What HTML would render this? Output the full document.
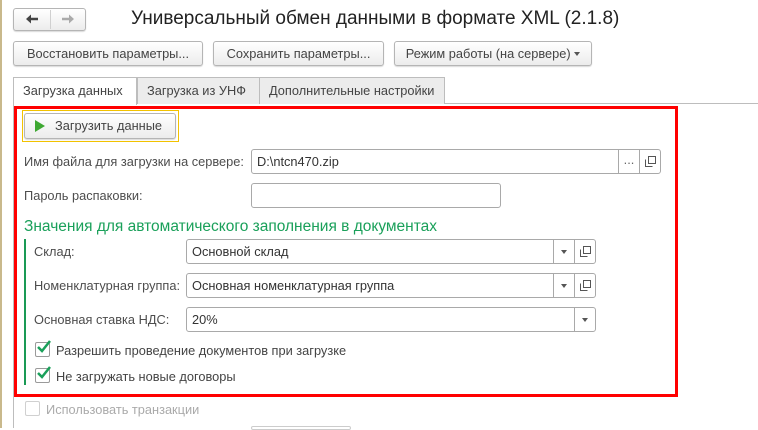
<!DOCTYPE html>
<html><head><meta charset="utf-8"><style>
*{box-sizing:border-box;margin:0;padding:0}
body{width:758px;height:428px;overflow:hidden;background:#fff;font-family:"Liberation Sans",Arial,sans-serif;font-size:12.8px;color:#4d4d4d;position:relative}
.a{position:absolute}
.btn{position:absolute;border:1px solid #b5b5b5;border-radius:3px;background:linear-gradient(#fff,#ececec);box-shadow:0 1px 1px rgba(0,0,0,.15);color:#444;text-align:center;white-space:nowrap}
.inp{position:absolute;border:1px solid #a9a9a9;border-radius:3px;background:#fff;color:#333;white-space:nowrap;padding-left:5px}
.sb{position:absolute;top:0;bottom:0;border-left:1px solid #a9a9a9;width:21px;text-align:center}
.tab{position:absolute;top:77px;height:27px;border:1px solid #bdbdbd;border-bottom:none;background:#ececec;color:#444;line-height:25px;padding-left:9px;white-space:nowrap}
.lbl{position:absolute;white-space:nowrap}
.cb{position:absolute;width:15px;height:15px;border:1px solid #9a9a9a;border-radius:2px;background:#fff}
.dd{display:inline-block;width:0;height:0;border-left:3.5px solid transparent;border-right:3.5px solid transparent;border-top:4px solid #555;margin-bottom:2px}
</style></head><body>
<div class="a" style="left:0;top:0;width:2px;height:428px;background:#c9b98c"></div>

<div class="btn" style="left:13px;top:8px;width:73px;height:23px"></div>
<div class="a" style="left:50px;top:10px;width:1px;height:19px;background:#d0d0d0"></div>
<svg class="a" style="left:25px;top:13px" width="14" height="12"><path d="M1 6 L6 1.5 L6 4.8 L13 4.8 L13 7.2 L6 7.2 L6 10.5 Z" fill="#444"/></svg>
<svg class="a" style="left:61px;top:13px" width="14" height="12"><path d="M13 6 L8 1.5 L8 4.8 L1 4.8 L1 7.2 L8 7.2 L8 10.5 Z" fill="#aaa"/></svg>
<div class="a" style="left:131px;top:8px;font-size:19px;color:#222;white-space:nowrap">Универсальный обмен данными в формате XML (2.1.8)</div>

<div class="btn" style="left:13px;top:41px;width:190px;height:25px;line-height:23px">Восстановить параметры...</div>
<div class="btn" style="left:213px;top:41px;width:171px;height:25px;line-height:23px">Сохранить параметры...</div>
<div class="btn" style="left:394px;top:41px;width:198px;height:25px;line-height:23px">Режим работы (на сервере) <span class="dd"></span></div>

<div class="a" style="left:13px;top:103px;width:745px;height:1px;background:#bdbdbd"></div>
<div class="a" style="left:13px;top:103px;width:1px;height:325px;background:#bdbdbd"></div>
<div class="tab" style="left:13px;width:124px;background:#fff;height:28px">Загрузка данных</div>
<div class="tab" style="left:137px;width:123px">Загрузка из УНФ</div>
<div class="tab" style="left:259px;width:186px">Дополнительные настройки</div>

<div class="a" style="left:14px;top:106px;width:664px;height:291px;border:3px solid #f00"></div>

<div class="a" style="left:22px;top:110px;width:157px;height:32px;border:1px solid #f2c200"></div>
<div class="btn" style="left:24px;top:113px;width:152px;height:26px;line-height:24px;text-align:left;padding-left:30px">Загрузить данные</div>
<svg class="a" style="left:35px;top:120px" width="10" height="12"><path d="M0 0 L10 6 L0 12Z" fill="#3ea832"/></svg>

<div class="lbl" style="left:24px;top:154px">Имя файла для загрузки на сервере:</div>
<div class="inp" style="left:251px;top:149px;width:410px;height:25px;line-height:23px">D:\ntcn470.zip
<div class="sb" style="right:21px;line-height:20px;color:#666">...</div>
<div class="sb" style="right:0"><svg width="11" height="11" style="margin-top:6px"><path d="M3.5 0.5h7v7h-7z M0.5 3.5v7h7" fill="none" stroke="#555"/></svg></div></div>

<div class="lbl" style="left:24px;top:188px">Пароль распаковки:</div>
<div class="inp" style="left:251px;top:183px;width:250px;height:25px"></div>

<div class="lbl" style="left:24px;top:218px;font-size:15.5px;color:#1aa05a">Значения для автоматического заполнения в документах</div>
<div class="a" style="left:24px;top:239px;width:2px;height:146px;background:#1a9a55"></div>

<div class="lbl" style="left:34px;top:244px">Склад:</div>
<div class="inp" style="left:186px;top:239px;width:410px;height:25px;line-height:23px">Основной склад
<div class="sb" style="right:21px"><span class="dd"></span></div>
<div class="sb" style="right:0"><svg width="11" height="11" style="margin-top:6px"><path d="M3.5 0.5h7v7h-7z M0.5 3.5v7h7" fill="none" stroke="#555"/></svg></div></div>

<div class="lbl" style="left:34px;top:278px">Номенклатурная группа:</div>
<div class="inp" style="left:186px;top:273px;width:410px;height:25px;line-height:23px">Основная номенклатурная группа
<div class="sb" style="right:21px"><span class="dd"></span></div>
<div class="sb" style="right:0"><svg width="11" height="11" style="margin-top:6px"><path d="M3.5 0.5h7v7h-7z M0.5 3.5v7h7" fill="none" stroke="#555"/></svg></div></div>

<div class="lbl" style="left:34px;top:312px">Основная ставка НДС:</div>
<div class="inp" style="left:186px;top:307px;width:410px;height:25px;line-height:23px">20%
<div class="sb" style="right:0"><span class="dd"></span></div></div>

<div class="cb" style="left:35px;top:342px"></div>
<svg class="a" style="left:36px;top:339px" width="16" height="16"><path d="M2 8 L6 12 L14 2" fill="none" stroke="#1aa05a" stroke-width="2.5"/></svg>
<div class="lbl" style="left:56px;top:343px;color:#444">Разрешить проведение документов при загрузке</div>
<div class="cb" style="left:35px;top:368px"></div>
<svg class="a" style="left:36px;top:365px" width="16" height="16"><path d="M2 8 L6 12 L14 2" fill="none" stroke="#1aa05a" stroke-width="2.5"/></svg>
<div class="lbl" style="left:56px;top:369px;color:#444">Не загружать новые договоры</div>

<div class="cb" style="left:25px;top:401px;border-color:#d0d0d0"></div>
<div class="lbl" style="left:46px;top:402px;color:#aaa">Использовать транзакции</div>
<div class="a" style="left:251px;top:426px;width:100px;height:4px;border:1px solid #ccc;border-radius:3px"></div>
</body></html>
